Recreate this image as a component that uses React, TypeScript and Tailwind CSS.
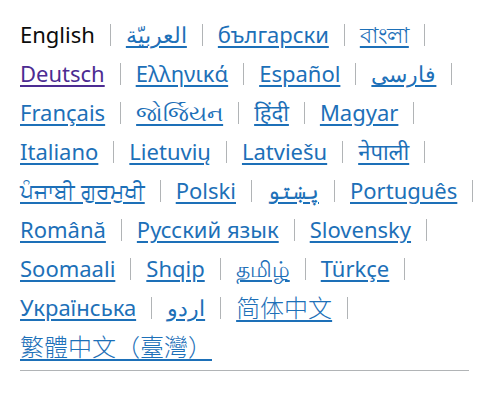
const languages = [
  { name: 'English', current: true },
  { name: 'العربيّة', lang: 'ar' },
  { name: 'български' },
  { name: 'বাংলা' },
  { name: 'Deutsch', visited: true },
  { name: 'Ελληνικά' },
  { name: 'Español' },
  { name: 'فارسی', lang: 'fa' },
  { name: 'Français' },
  { name: 'જોર્જિયન' },
  { name: 'हिंदी' },
  { name: 'Magyar' },
  { name: 'Italiano' },
  { name: 'Lietuvių' },
  { name: 'Latviešu' },
  { name: 'नेपाली' },
  { name: 'ਪੰਜਾਬੀ ਗੁਰਮੁਖੀ' },
  { name: 'Polski' },
  { name: 'پښتو', lang: 'ps' },
  { name: 'Português' },
  { name: 'Română' },
  { name: 'Русский язык' },
  { name: 'Slovensky' },
  { name: 'Soomaali' },
  { name: 'Shqip' },
  { name: 'தமிழ்' },
  { name: 'Türkçe' },
  { name: 'Українська' },
  { name: 'اردو', lang: 'ur' },
  { name: '简体中文', cjk: true },
  { name: '繁體中文（臺灣）', cjk: true },
];

export default function App() {
  return (
    <div className="overflow-hidden bg-white px-5 pt-[15px] font-['Noto_Sans','Noto_Sans_CJK_SC',sans-serif] text-[22px]">
      <nav aria-label="Translations">
        {/* trailing separator margin shouldn't force a wrap */}
        <ul className="-mr-[30px] flex flex-wrap items-center">
          {languages.map((l, i) => {
            const isLast = i === languages.length - 1;
            return (
              <li key={l.name} className="flex items-center h-[39px]">
                {l.current ? (
                  <span className="text-[#0b0c0c]">{l.name}</span>
                ) : (
                  <a
                    href="#"
                    lang={l.lang}
                    className={`underline decoration-2 underline-offset-[3px] ${
                      l.visited ? 'text-[#4c2c92]' : 'text-[#1d70b8]'
                    } ${l.cjk ? 'text-[24px] font-light' : ''}`}
                  >
                    {l.name}
                  </a>
                )}
                {!isLast && <span className="mx-[15px] h-[22px] w-px bg-[#b1b4b6]" />}
              </li>
            );
          })}
        </ul>
        <hr className="mt-[4px] border-t border-[#b1b4b6]" />
      </nav>
    </div>
  );
}
